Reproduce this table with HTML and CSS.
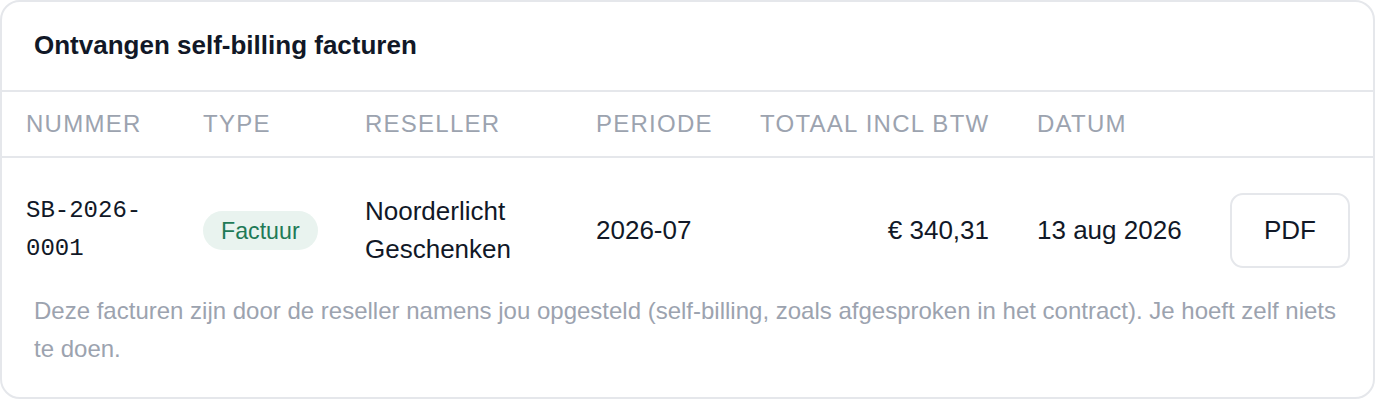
FILE: index.html
```html
<!DOCTYPE html>
<html lang="nl">

<head>
    <meta charset="UTF-8">
    <meta name="viewport" content="width=device-width, initial-scale=1.0">
    <title>Self-billing facturen</title>
    <link rel="stylesheet" href="styles.css">
</head>

<body>
    <div class="card">
        <div class="card-head">
            <h2 class="title">Ontvangen self-billing facturen</h2>
        </div>
        <table class="invoices">
            <colgroup>
                <col class="c-num">
                <col class="c-type">
                <col class="c-reseller">
                <col class="c-period">
                <col class="c-total">
                <col class="c-date">
                <col class="c-action">
            </colgroup>
            <thead>
                <tr>
                    <th>Nummer</th>
                    <th>Type</th>
                    <th>Reseller</th>
                    <th>Periode</th>
                    <th class="right">Totaal incl btw</th>
                    <th>Datum</th>
                    <th></th>
                </tr>
            </thead>
            <tbody>
                <tr>
                    <td class="mono">SB-2026-0001</td>
                    <td><span class="badge">Factuur</span></td>
                    <td>Noorderlicht Geschenken</td>
                    <td>2026-07</td>
                    <td class="right">€ 340,31</td>
                    <td>13 aug 2026</td>
                    <td><button class="btn">PDF</button></td>
                </tr>
            </tbody>
        </table>
        <p class="note">Deze facturen zijn door de reseller namens jou opgesteld (self-billing, zoals afgesproken in het contract). Je hoeft zelf niets te doen.</p>
    </div>
</body>

</html>
```

FILE: styles.css
```css
body {
    margin: 0;
    background-color: #ffffff;
    font-family: "Liberation Sans", Arial, sans-serif;
    color: #111827;
}

.card {
    border: 2px solid #e5e7eb;
    border-radius: 20px;
    margin-right: 1px;
    background-color: #fff;
    overflow: hidden;
}

.card-head {
    padding: 24px 32px 25.6px;
    border-bottom: 2px solid #e5e7eb;
}

.title {
    margin: 0;
    font-size: 26px;
    line-height: 38.4px;
    font-weight: 700;
    color: #111827;
}

.invoices {
    width: 100%;
    table-layout: fixed;
    border-collapse: collapse;
}

.c-num {
    width: 177px;
}

.c-type {
    width: 162px;
}

.c-reseller {
    width: 231px;
}

.c-period {
    width: 164px;
}

.c-total {
    width: 277px;
}

.c-date {
    width: 193px;
}

.invoices th {
    padding: 14px 24px 14px 24px;
    font-size: 24px;
    line-height: 36px;
    font-weight: 400;
    letter-spacing: 1.25px;
    text-transform: uppercase;
    text-align: left;
    color: #9ca3af;
    border-bottom: 2px solid #e5e7eb;
    white-space: nowrap;
}

.invoices td {
    padding: 34px 24px 20px 24px;
    font-size: 26px;
    line-height: 38.4px;
    vertical-align: middle;
    color: #111827;
}

.invoices .right {
    text-align: right;
}

.invoices td.mono {
    font-family: "Liberation Mono", "Courier New", monospace;
    font-size: 24px;
    line-height: 38px;
}

.badge {
    display: inline-block;
    padding: 5.6px 18px;
    border-radius: 999px;
    background-color: #e9f3ef;
    color: #1f7a57;
    font-size: 23.2px;
    line-height: 28px;
}

.btn {
    display: block;
    margin-left: auto;
    margin-right: -1px;
    padding: 16px 32px;
    border: 2px solid #e5e7eb;
    border-radius: 13px;
    background-color: #fff;
    font-family: "Liberation Sans", Arial, sans-serif;
    font-size: 26px;
    line-height: 38.4px;
    color: #111827;
    cursor: pointer;
}

.btn:hover {
    background-color: #f9fafb;
}

.note {
    margin: 0;
    padding: 3px 32px 28px;
    font-size: 24px;
    line-height: 38.4px;
    color: #9ca3af;
}
```
